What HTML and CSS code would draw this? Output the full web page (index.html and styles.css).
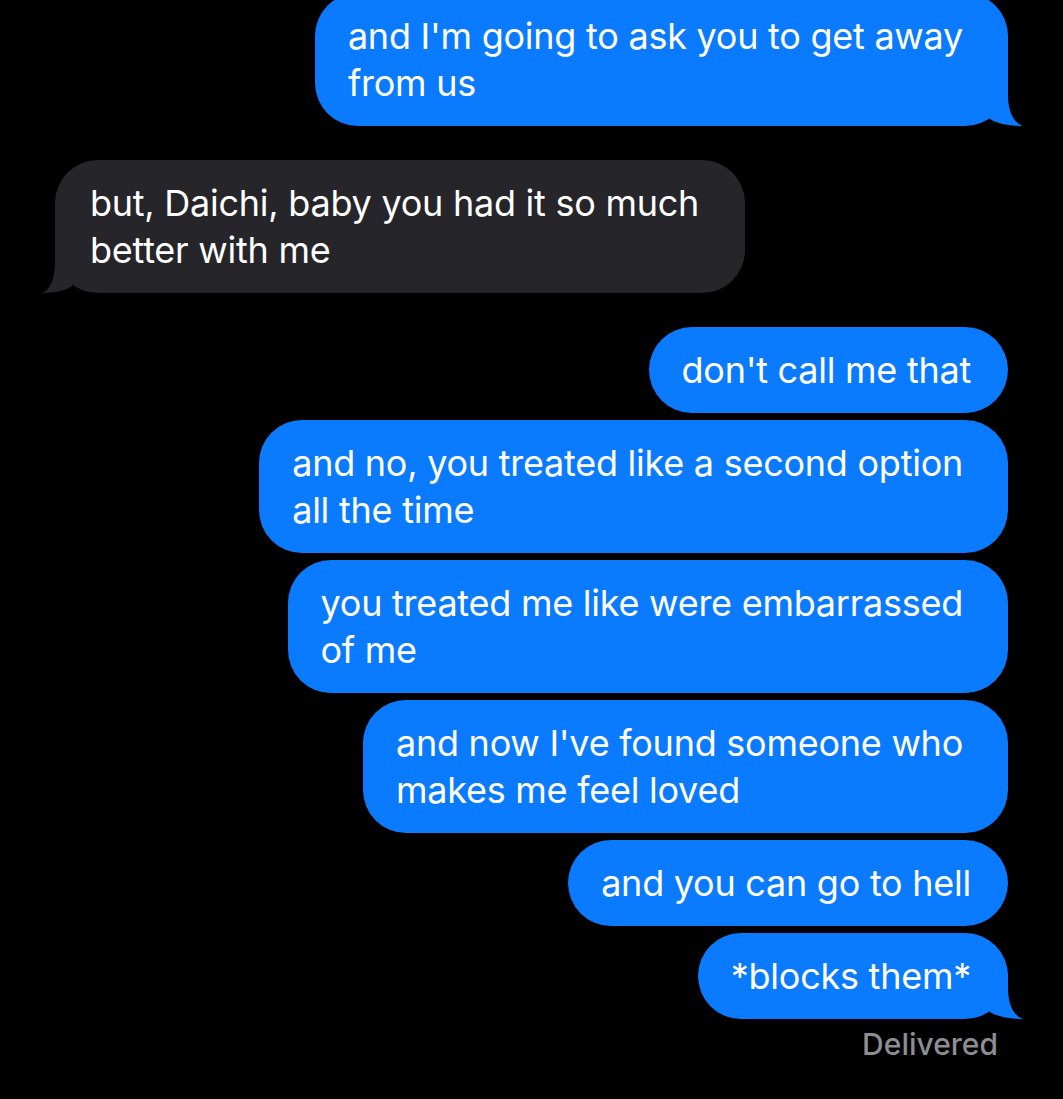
FILE: index.html
```html
<!DOCTYPE html>
<html>
<head>
    <title>Messages</title>
    <link rel="stylesheet" href="styles.css">
</head>
<body>
    <div class="thread">
        <div class="bubble sent wrap tail">and I'm going to ask you to get away<br>from us</div>

        <div class="bubble received tail group">but, Daichi, baby you had it so much<br>better with me</div>

        <div class="bubble sent group">don't call me that</div>
        <div class="bubble sent wrap">and no, you treated like a second option<br>all the time</div>
        <div class="bubble sent wrap">you treated me like were embarrassed<br>of me</div>
        <div class="bubble sent wrap">and now I've found someone who<br>makes me feel loved</div>
        <div class="bubble sent">and you can go to hell</div>
        <div class="bubble sent tail">*blocks them*</div>
        <div class="status">Delivered</div>
    </div>
</body>
</html>
```

FILE: styles.css
```css
body { margin: 0; background: #000; font-family: Inter, "Noto Sans", sans-serif; }
.thread { display: flex; flex-direction: column; gap: 7px; padding: 0 55px; margin-top: -7px; }
.bubble { position: relative; max-width: 700px; padding: 19.5px 37px 19.5px 33px; border-radius: 43px; font-size: 36px; line-height: 47px; letter-spacing: -0.25px; color: #fff; }
.bubble.wrap { padding-right: 45px; }
.bubble.sent { align-self: flex-end; background: #0a7bff; }
.bubble.received { align-self: flex-start; background: #262529; padding-left: 35px; padding-right: 46px; }
.bubble.group { margin-top: 27px; }
.bubble.tail::before { content: ""; position: absolute; bottom: 0; width: 40px; height: 46px; }
.bubble.sent.tail::before { right: -16px; background: #0a7bff; clip-path: path("M 24 0 L 24 15 C 24 32 30 43 39 46 C 31 46 15 45 6 39 L 6 0 Z"); }
.bubble.received.tail::before { left: -16px; background: #262529; clip-path: path("M 16 0 L 16 15 C 16 32 11 43 3 46 C 11 46 25 45 33 39 L 33 0 Z"); }
.status { align-self: flex-end; margin-right: 10px; font-size: 30px; line-height: 36px; font-weight: 500; color: #8d8d92; }
```
